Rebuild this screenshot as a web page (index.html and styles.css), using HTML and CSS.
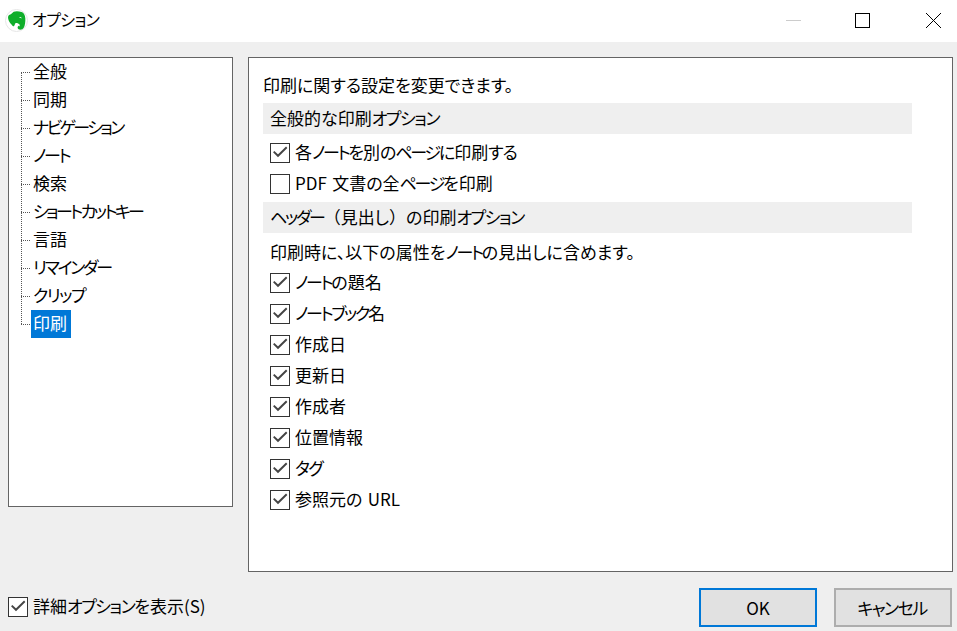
FILE: index.html
```html
<!DOCTYPE html>
<html lang="ja">
<head>
<meta charset="utf-8">
<title>オプション</title>
<link rel="stylesheet" href="styles.css">
</head>
<body>
<div class="window">
  <header class="titlebar">
    <svg class="app-icon" width="23" height="23" viewBox="0 0 23 23">
      <circle cx="11.5" cy="11.5" r="11" fill="#fff" stroke="#e6e6e6"/>
      <g transform="translate(11.5 11.5) scale(1.13) translate(-11 -11)">
        <path d="M6 5.5 L8.5 3.2 C10 2.6 13 2.6 15.5 3.4 C17.5 4 18.6 6 18.8 9 C19 12 18.5 15.5 17.4 17.5 C16.5 19.2 14.2 19.6 12.8 18.8 C11.8 18.2 11.6 16.2 13 15.6 L14 16.2 L13.6 14.4 C12 13.4 11 13 10 13.4 L9 15.6 C8.4 16.6 7.6 16 7 15 C5.6 13.8 4 11.6 3.6 9.2 C3.4 8 3.6 6.8 4.4 6.2 Z" fill="#0fae2a"/>
        <path d="M13.2 8.2 C14.2 7.6 15.3 8 15.6 9.2 C14.8 8.8 14 8.7 13.2 8.2 Z" fill="#fff"/>
      </g>
    </svg>
    <span class="title"><span class="k3">オプション</span></span>
    <div class="controls">
      <svg class="ctl-min" width="15" height="15" viewBox="0 0 15 15"><path d="M0 7.5H15" stroke="#ccc" fill="none"/></svg>
      <svg class="ctl-max" width="15" height="15" viewBox="0 0 15 15"><rect x=".5" y=".5" width="14" height="14" fill="none" stroke="#000"/></svg>
      <svg class="ctl-close" width="15" height="15" viewBox="0 0 15 15"><path d="M0 0L15 15M15 0L0 15" stroke="#000" fill="none"/></svg>
    </div>
  </header>

  <main class="main">
    <nav class="sidebar">
      <ul class="tree">
        <li class="tree-item"><span class="tree-label">全般</span></li>
        <li class="tree-item"><span class="tree-label">同期</span></li>
        <li class="tree-item"><span class="tree-label"><span class="k5">ナビゲーション</span></span></li>
        <li class="tree-item"><span class="tree-label"><span class="k">ノート</span></span></li>
        <li class="tree-item"><span class="tree-label">検索</span></li>
        <li class="tree-item"><span class="tree-label"><span class="k5">ショートカットキー</span></span></li>
        <li class="tree-item"><span class="tree-label">言語</span></li>
        <li class="tree-item"><span class="tree-label"><span class="k">リマインダー</span></span></li>
        <li class="tree-item"><span class="tree-label"><span class="k2">クリップ</span></span></li>
        <li class="tree-item"><span class="tree-label selected">印刷</span></li>
      </ul>
    </nav>

    <section class="panel">
      <p class="intro">印刷に関する設定を変更できます。</p>
      <h2 class="band">全般的な印刷<span class="k2">オプション</span></h2>
      <label class="check"><span class="box"><svg class="tick" width="14" height="12" viewBox="0 0 14 12"><path d="M.7 4.6L5 8.8L13.7 .3" fill="none" stroke="#444" stroke-width="1.9"/></svg></span><span class="check-text">各<span class="k">ノート</span><span class="k4">を</span>別<span class="k4">の</span><span class="k">ページ</span><span class="k4">に</span>印刷<span class="k4">する</span></span></label>
      <label class="check"><span class="box"></span><span class="check-text">PDF 文書の全<span class="k">ページ</span>を印刷</span></label>
      <h2 class="band band-second"><span class="k">ヘッダー</span><span class="full">（</span>見出し<span class="full">）</span>の印刷<span class="k2">オプション</span></h2>
      <p class="note">印刷時に、以下の属性を<span class="k">ノート</span>の見出しに含めます。</p>
      <label class="check"><span class="box"><svg class="tick" width="14" height="12" viewBox="0 0 14 12"><path d="M.7 4.6L5 8.8L13.7 .3" fill="none" stroke="#444" stroke-width="1.9"/></svg></span><span class="check-text"><span class="k">ノート</span>の題名</span></label>
      <label class="check"><span class="box"><svg class="tick" width="14" height="12" viewBox="0 0 14 12"><path d="M.7 4.6L5 8.8L13.7 .3" fill="none" stroke="#444" stroke-width="1.9"/></svg></span><span class="check-text"><span class="k">ノートブック</span>名</span></label>
      <label class="check"><span class="box"><svg class="tick" width="14" height="12" viewBox="0 0 14 12"><path d="M.7 4.6L5 8.8L13.7 .3" fill="none" stroke="#444" stroke-width="1.9"/></svg></span><span class="check-text">作成日</span></label>
      <label class="check"><span class="box"><svg class="tick" width="14" height="12" viewBox="0 0 14 12"><path d="M.7 4.6L5 8.8L13.7 .3" fill="none" stroke="#444" stroke-width="1.9"/></svg></span><span class="check-text">更新日</span></label>
      <label class="check"><span class="box"><svg class="tick" width="14" height="12" viewBox="0 0 14 12"><path d="M.7 4.6L5 8.8L13.7 .3" fill="none" stroke="#444" stroke-width="1.9"/></svg></span><span class="check-text">作成者</span></label>
      <label class="check"><span class="box"><svg class="tick" width="14" height="12" viewBox="0 0 14 12"><path d="M.7 4.6L5 8.8L13.7 .3" fill="none" stroke="#444" stroke-width="1.9"/></svg></span><span class="check-text">位置情報</span></label>
      <label class="check"><span class="box"><svg class="tick" width="14" height="12" viewBox="0 0 14 12"><path d="M.7 4.6L5 8.8L13.7 .3" fill="none" stroke="#444" stroke-width="1.9"/></svg></span><span class="check-text"><span class="k2">タグ</span></span></label>
      <label class="check"><span class="box"><svg class="tick" width="14" height="12" viewBox="0 0 14 12"><path d="M.7 4.6L5 8.8L13.7 .3" fill="none" stroke="#444" stroke-width="1.9"/></svg></span><span class="check-text">参照元の URL</span></label>
    </section>
  </main>

  <footer class="footer">
    <label class="check check-footer"><span class="box"><svg class="tick" width="14" height="12" viewBox="0 0 14 12"><path d="M.7 4.6L5 8.8L13.7 .3" fill="none" stroke="#444" stroke-width="1.9"/></svg></span><span class="check-text">詳細<span class="k2">オプション</span>を表示(S)</span></label>
    <div class="buttons">
      <button class="btn btn-default">OK</button>
      <button class="btn"><span class="k2 btn-label">キャンセル</span></button>
    </div>
  </footer>
</div>
</body>
</html>
```

FILE: styles.css
```css
* { box-sizing: border-box; }
html, body { margin: 0; padding: 0; }
body {
  width: 957px;
  height: 631px;
  overflow: hidden;
  font-family: "Noto Sans CJK JP", "Noto Sans", sans-serif;
  font-size: 17px;
  font-feature-settings: "palt";
  color: #000;
  background: #efefef;
}
.window { display: flex; flex-direction: column; height: 631px; }
.k { letter-spacing: -2.3px; }
.k2 { letter-spacing: -1.5px; }
.k3 { letter-spacing: -0.6px; }
.k4 { letter-spacing: -1px; }
.k5 { letter-spacing: -2.65px; }
.full { font-feature-settings: normal; }

.titlebar {
  display: flex;
  align-items: center;
  height: 42px;
  padding: 0 16px 2px 5px;
  background: #fff;
}
.app-icon { flex: none; margin-right: 4px; }
.title { font-size: 16px; line-height: 24px; margin-bottom: 2px; }
.controls { margin-left: auto; display: flex; align-items: center; }
.controls svg { display: block; }
.ctl-max { margin-left: 54px; }
.ctl-close { margin-left: 56px; }

.main {
  display: flex;
  align-items: flex-start;
  gap: 15px;
  padding: 15px 4px 0 8px;
}
.sidebar {
  width: 225px;
  height: 450px;
  background: #fff;
  border: 1px solid #646464;
}
.tree {
  position: relative;
  list-style: none;
  margin: 0;
  padding: 0 0 0 22px;
}
.tree::before {
  content: "";
  position: absolute;
  left: 12px;
  top: 14px;
  height: 252px;
  border-left: 1px dotted #555;
}
.tree-item {
  position: relative;
  display: flex;
  align-items: center;
  height: 28px;
}
.tree-item::before {
  content: "";
  position: absolute;
  left: -10px;
  top: 14px;
  width: 9px;
  border-top: 1px dotted #555;
}
.tree-label {
  display: block;
  height: 28px;
  line-height: 26px;
  padding: 0 4px 0 2px;
}
.selected { background: #0078d7; color: #fff; }

.panel {
  width: 705px;
  height: 515px;
  background: #fff;
  border: 1px solid #646464;
  padding: 13px 40px 0 14px;
  word-spacing: 1.5px;
}
.intro { margin: 0 0 1px; height: 31px; line-height: 28px; }
.band {
  margin: 0 0 3px;
  height: 31px;
  padding-left: 7px;
  background: #efefef;
  font-size: 17px;
  font-weight: 400;
  line-height: 29px;
}
.band-second { margin-top: 3px; margin-bottom: 4px; }
.note { margin: 0; padding-left: 7px; height: 30px; line-height: 30px; }

.check {
  display: flex;
  align-items: center;
  height: 31px;
  padding-left: 7px;
}
.check-text { margin-bottom: 2px; }
.box {
  flex: none;
  display: flex;
  align-items: center;
  justify-content: center;
  width: 20px;
  height: 20px;
  margin-right: 5px;
  background: #fff;
  border: 1px solid #333;
}
.tick { overflow: visible; }
.footer {
  display: flex;
  align-items: flex-start;
  justify-content: space-between;
  margin-top: 16px;
  padding: 0 5px 0 8px;
}
.check-footer { padding-left: 0; margin-top: 3px; height: 31px; }
.buttons { display: flex; gap: 17px; }
.btn {
  width: 118px;
  height: 39px;
  padding: 0;
  font: inherit;
  font-feature-settings: "palt";
  color: #000;
  background: #e1e1e1;
  border: 2px solid #adadad;
}
.btn-label { margin-right: 2px; }
.btn-default { border-color: #0078d7; }
```
